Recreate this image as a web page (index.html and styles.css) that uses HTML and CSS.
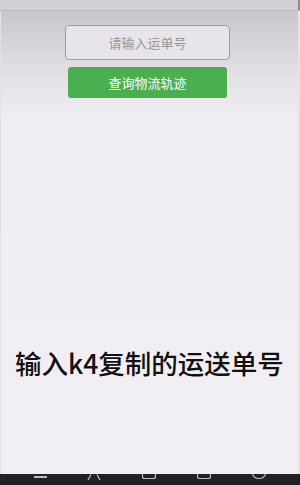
FILE: index.html
```html
<!DOCTYPE html>
<html lang="zh-CN">
<head>
    <meta charset="UTF-8">
    <meta name="viewport" content="width=device-width, initial-scale=1.0">
    <title>查询物流轨迹</title>
    <link rel="stylesheet" href="styles.css">
</head>
<body>
    <div class="screen">
        <div class="top-bar"></div>
        <div class="content">
            <form class="query-form">
                <input type="text" class="track-input" placeholder="请输入运单号">
                <button type="button" class="track-btn">查询物流轨迹</button>
            </form>
            <div class="hint">输入k4复制的运送单号</div>
        </div>
        <div class="nav-bar">
            <span class="nav-line"></span>
            <svg class="nav-icon" width="16" height="6" viewBox="0 0 16 6"><path d="M2 6 L5 0.5 M14 6 L11 0.5" stroke="#bdbdc2" stroke-width="1.2" fill="none"/></svg>
            <svg class="nav-icon" width="16" height="6" viewBox="0 0 16 6"><path d="M1.5 0 V2.5 Q1.5 4.5 3.5 4.5 H12.5 Q14.5 4.5 14.5 2.5 V0" stroke="#bdbdc2" stroke-width="1.2" fill="none"/></svg>
            <svg class="nav-icon" width="16" height="6" viewBox="0 0 16 6"><path d="M1.5 0 V2.5 Q1.5 4.5 3.5 4.5 H12.5 Q14.5 4.5 14.5 2.5 V0" stroke="#bdbdc2" stroke-width="1.2" fill="none"/></svg>
            <svg class="nav-icon" width="16" height="6" viewBox="0 0 16 6"><path d="M1.5 0 Q3 4.5 8 4.5 Q13 4.5 14.5 0" stroke="#bdbdc2" stroke-width="1.2" fill="none"/></svg>
        </div>
    </div>
</body>
</html>
```

FILE: styles.css
```css
body {
    margin: 0;
    font-family: "Noto Sans CJK SC", "Noto Sans", sans-serif;
}
.screen {
    width: 300px;
    height: 485px;
    display: flex;
    flex-direction: column;
    overflow: hidden;
}
.top-bar {
    height: 10px;
    background-color: #d1cfd3;
    border-bottom: 1px solid #bebcc1;
    border-right: 2px solid #8e8d92;
}
.content {
    flex: 1;
    display: flex;
    flex-direction: column;
    background: linear-gradient(to bottom, #c9c7cb 0px, #e6e3e8 70px, #f1eef3 110px, #f2eff4 100%);
    border-left: 1px solid #e4e1e6;
    border-right: 2px solid #e6e3e8;
}
.query-form {
    display: flex;
    flex-direction: column;
    align-items: center;
    padding-top: 14px;
    padding-right: 4px;
}
.track-input {
    width: 165px;
    height: 35px;
    box-sizing: border-box;
    border: 1px solid #9f9ea6;
    border-radius: 4px;
    background-color: #e7e5e9;
    text-align: center;
    font-family: inherit;
    font-size: 13px;
    color: #333;
    outline: none;
}
.track-input::placeholder {
    color: #98969c;
}
.track-btn {
    width: 159px;
    height: 31px;
    margin-top: 7px;
    border: none;
    border-radius: 3px;
    background-color: #4bae4f;
    color: #fff;
    font-family: inherit;
    font-size: 13px;
    cursor: pointer;
}
.hint {
    margin-top: auto;
    margin-bottom: 95px;
    padding-left: 14px;
    font-size: 26.5px;
    font-weight: 500;
    color: #111;
    line-height: 32px;
    white-space: nowrap;
}
.nav-bar {
    height: 11px;
    background-color: #222124;
    display: flex;
    align-items: flex-start;
    justify-content: space-around;
    padding: 0 14px;
}
.nav-line {
    width: 13px;
    height: 2px;
    margin-top: 2px;
    background-color: #bdbdc2;
}
.nav-icon {
    display: block;
}
```
